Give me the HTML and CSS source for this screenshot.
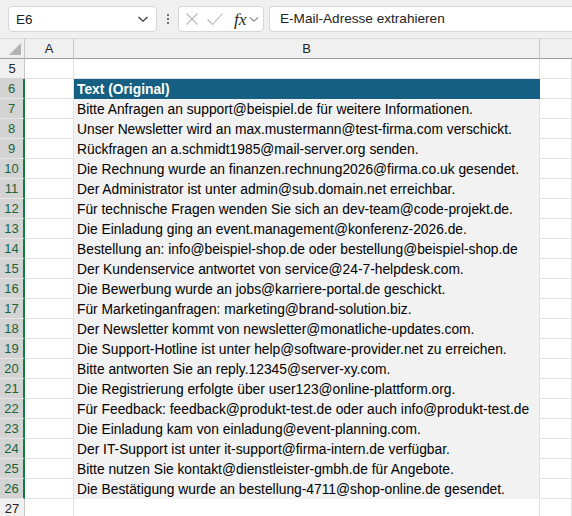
FILE: index.html
```html
<!DOCTYPE html>
<html lang="de">
<head>
<meta charset="utf-8">
<link rel="stylesheet" href="styles.css">
</head>
<body>
<div class="toolbar">
  <div class="namebox">
    <span class="nb-text">E6</span>
    <svg class="chev" width="12" height="8" viewBox="0 0 12 8"><path d="M1.5 2 L6 6.2 L10.5 2" fill="none" stroke="#333" stroke-width="1.2"/></svg>
  </div>
  <div class="dots"><i></i><i></i><i></i></div>
  <div class="fxbox">
    <svg class="ic" width="16" height="16" viewBox="0 0 16 16"><path d="M2.5 2.5 L13.5 13.5 M13.5 2.5 L2.5 13.5" stroke="#b8b8b8" stroke-width="1.1" fill="none"/></svg>
    <svg class="ic" width="18" height="16" viewBox="0 0 18 16"><path d="M1.5 8.5 L6.5 13.5 L16.5 2.5" stroke="#b8b8b8" stroke-width="1.1" fill="none"/></svg>
    <span class="fx">fx</span>
    <svg class="chev2" width="10" height="7" viewBox="0 0 10 7"><path d="M1 1.5 L5 5.2 L9 1.5" fill="none" stroke="#8a8a8a" stroke-width="1.1"/></svg>
  </div>
  <div class="formula">E-Mail-Adresse extrahieren</div>
</div>
<div class="sheet">
  <div class="corner"><svg width="14" height="14" viewBox="0 0 14 14"><path d="M13 1 L13 13 L1 13 Z" fill="#b4b4b4"/></svg></div>
  <div class="colhead">A</div>
  <div class="colhead">B</div>
  <div class="colhead last"></div>

  <div class="rh">5</div><div class="c"></div><div class="c"></div><div class="c"></div>
  <div class="rh sel">6</div><div class="c"></div><div class="c head">Text (Original)</div><div class="c"></div>
  <div class="rh sel">7</div><div class="c"></div><div class="c t">Bitte Anfragen an support@beispiel.de für weitere Informationen.</div><div class="c"></div>
  <div class="rh sel">8</div><div class="c"></div><div class="c t">Unser Newsletter wird an max.mustermann@test-firma.com verschickt.</div><div class="c"></div>
  <div class="rh sel">9</div><div class="c"></div><div class="c t">Rückfragen an a.schmidt1985@mail-server.org senden.</div><div class="c"></div>
  <div class="rh sel">10</div><div class="c"></div><div class="c t">Die Rechnung wurde an finanzen.rechnung2026@firma.co.uk gesendet.</div><div class="c"></div>
  <div class="rh sel">11</div><div class="c"></div><div class="c t">Der Administrator ist unter admin@sub.domain.net erreichbar.</div><div class="c"></div>
  <div class="rh sel">12</div><div class="c"></div><div class="c t">Für technische Fragen wenden Sie sich an dev-team@code-projekt.de.</div><div class="c"></div>
  <div class="rh sel">13</div><div class="c"></div><div class="c t">Die Einladung ging an event.management@konferenz-2026.de.</div><div class="c"></div>
  <div class="rh sel">14</div><div class="c"></div><div class="c t">Bestellung an: info@beispiel-shop.de oder bestellung@beispiel-shop.de</div><div class="c"></div>
  <div class="rh sel">15</div><div class="c"></div><div class="c t">Der Kundenservice antwortet von service@24-7-helpdesk.com.</div><div class="c"></div>
  <div class="rh sel">16</div><div class="c"></div><div class="c t">Die Bewerbung wurde an jobs@karriere-portal.de geschickt.</div><div class="c"></div>
  <div class="rh sel">17</div><div class="c"></div><div class="c t">Für Marketinganfragen: marketing@brand-solution.biz.</div><div class="c"></div>
  <div class="rh sel">18</div><div class="c"></div><div class="c t">Der Newsletter kommt von newsletter@monatliche-updates.com.</div><div class="c"></div>
  <div class="rh sel">19</div><div class="c"></div><div class="c t">Die Support-Hotline ist unter help@software-provider.net zu erreichen.</div><div class="c"></div>
  <div class="rh sel">20</div><div class="c"></div><div class="c t">Bitte antworten Sie an reply.12345@server-xy.com.</div><div class="c"></div>
  <div class="rh sel">21</div><div class="c"></div><div class="c t">Die Registrierung erfolgte über user123@online-plattform.org.</div><div class="c"></div>
  <div class="rh sel">22</div><div class="c"></div><div class="c t">Für Feedback: feedback@produkt-test.de oder auch info@produkt-test.de</div><div class="c"></div>
  <div class="rh sel">23</div><div class="c"></div><div class="c t">Die Einladung kam von einladung@event-planning.com.</div><div class="c"></div>
  <div class="rh sel">24</div><div class="c"></div><div class="c t">Der IT-Support ist unter it-support@firma-intern.de verfügbar.</div><div class="c"></div>
  <div class="rh sel">25</div><div class="c"></div><div class="c t">Bitte nutzen Sie kontakt@dienstleister-gmbh.de für Angebote.</div><div class="c"></div>
  <div class="rh sel">26</div><div class="c"></div><div class="c t">Die Bestätigung wurde an bestellung-4711@shop-online.de gesendet.</div><div class="c"></div>
  <div class="rh">27</div><div class="c"></div><div class="c"></div><div class="c"></div>
</div>
</body>
</html>
```
FILE: styles.css
```css
* { box-sizing: border-box; }
html, body { margin: 0; padding: 0; }
body {
  width: 572px;
  height: 516px;
  overflow: hidden;
  background: #ffffff;
  font-family: "Liberation Sans", Arial, sans-serif;
  color: #000;
}
.toolbar {
  height: 38px;
  background: #f0f0f0;
  display: flex;
  align-items: flex-start;
  padding: 6px 0 0 8px;
}
.namebox {
  width: 149px;
  height: 26px;
  background: #fff;
  border: 1px solid #d6d6d6;
  border-radius: 4px;
  display: flex;
  align-items: center;
  justify-content: space-between;
  padding: 0 7px 0 7px;
}
.nb-text { font-size: 13.5px; color: #222; }
.dots {
  width: 21px;
  height: 26px;
  display: flex;
  flex-direction: column;
  align-items: center;
  justify-content: center;
  gap: 2px;
}
.dots i { display: block; width: 2px; height: 2px; background: #444; border-radius: 1px; }
.fxbox {
  width: 86px;
  height: 26px;
  background: #fff;
  border: 1px solid #d6d6d6;
  border-radius: 4px;
  display: flex;
  align-items: center;
  padding: 0 0 0 5px;
  gap: 6px;
}
.fx {
  font-family: "Liberation Serif", "Times New Roman", serif;
  font-style: italic;
  font-size: 17.5px;
  color: #2a2a2a;
  margin-left: 4px;
  margin-right: -4px;
  line-height: 20px;
}
.formula {
  margin-left: 5px;
  flex: 1;
  height: 26px;
  background: #fff;
  border: 1px solid #d6d6d6;
  border-right: none;
  border-radius: 4px 0 0 4px;
  font-size: 13.6px;
  line-height: 24px;
  padding-left: 10px;
  color: #222;
}
.sheet {
  display: grid;
  grid-template-columns: 25px 49px 466px 32px;
  grid-auto-rows: 20px;
  border-top: 1px solid #d9d9d9;
}
.corner {
  background: #f0f0f0;
  border-right: 1px solid #c8c8c8;
  border-bottom: 1px solid #a0a0a0;
  display: flex;
  align-items: flex-end;
  justify-content: flex-end;
  padding: 0 2px 2px 0;
}
.colhead {
  background: #f0f0f0;
  border-right: 1px solid #c8c8c8;
  border-bottom: 1px solid #a0a0a0;
  text-align: center;
  font-size: 13px;
  line-height: 20px;
  color: #222;
}
.colhead.last { border-right: none; }
.rh {
  background: #f0f0f0;
  border-right: 1px solid #c8c8c8;
  border-bottom: 1px solid #d4d4d4;
  text-align: center;
  font-size: 13px;
  line-height: 20px;
  color: #222;
}
.rh.sel {
  background: #d3d3d3;
  color: #1c6336;
  border-right: 2px solid #107c41;
  border-bottom: 1px solid #e6e6e6;
}
.c {
  border-right: 1px solid #e1e1e1;
  border-bottom: 1px solid #e1e1e1;
  white-space: nowrap;
  font-size: 13.8px;
  line-height: 20px;
  padding-left: 3px;
  padding-top: 1px;
}
.c.head {
  background: #156082;
  color: #fff;
  font-weight: bold;
  border-color: #156082;
}
.c.t {
  background: #f2f2f2;
  border-bottom-color: #f2f2f2;
  border-right-color: #e1e1e1;
}
```
